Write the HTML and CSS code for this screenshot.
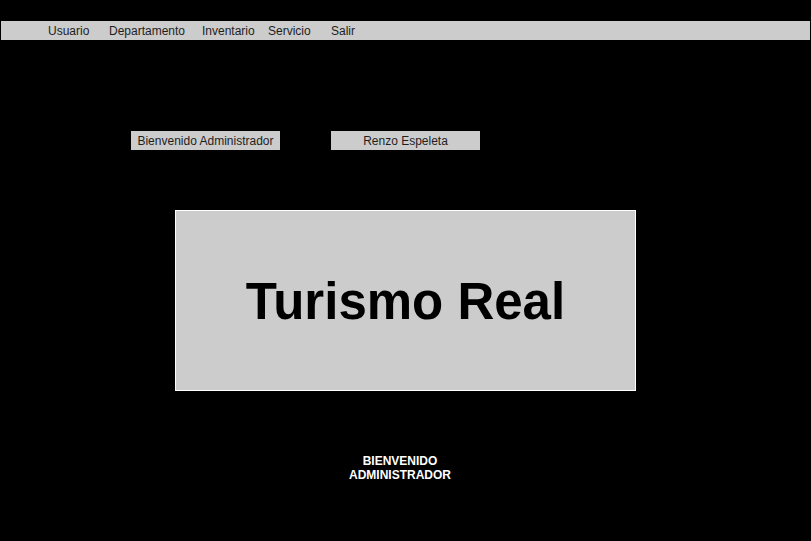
FILE: index.html
```html
<!DOCTYPE html>
<html lang="es">
<head>
<meta charset="utf-8">
<title>Turismo Real</title>
<link rel="stylesheet" href="styles.css">
</head>
<body>
<nav class="nav">
  <a class="nav-item">Usuario</a>
  <a class="nav-item">Departamento</a>
  <a class="nav-item">Inventario</a>
  <a class="nav-item">Servicio</a>
  <a class="nav-item">Salir</a>
</nav>
<div class="info-row">
  <div class="info-box">Bienvenido Administrador</div>
  <div class="info-box">Renzo Espeleta</div>
</div>
<div class="hero">Turismo Real</div>
<div class="welcome">BIENVENIDO<br>ADMINISTRADOR</div>
</body>
</html>
```
FILE: styles.css
```css
html, body {
  margin: 0;
  padding: 0;
  background: #000;
  font-family: "Liberation Sans", Arial, sans-serif;
}
body {
  width: 811px;
  height: 541px;
  overflow: hidden;
}
.nav {
  margin: 21px 0 0 1px;
  width: 809px;
  height: 19px;
  background: #cccccc;
  display: grid;
  grid-template-columns: 61px 93px 66px 63px auto;
  padding: 2px 0 0 47px;
  box-sizing: border-box;
}
.nav-item {
  font-size: 12px;
  line-height: 17px;
  color: #1e1e1e;
  white-space: nowrap;
}
.info-row {
  display: flex;
  gap: 51px;
  margin-top: 91px;
  padding-left: 131px;
}
.info-box {
  width: 149px;
  height: 19px;
  box-sizing: border-box;
  padding-top: 1px;
  background: #cccccc;
  color: #1e1e1e;
  font-size: 12px;
  line-height: 18px;
  text-align: center;
  white-space: nowrap;
}
.hero {
  margin: 60px 0 0 175px;
  width: 461px;
  height: 181px;
  box-sizing: border-box;
  border: 1px solid #ffffff;
  padding-top: 2px;
  background: #cccccc;
  color: #000;
  font-weight: bold;
  font-size: 51px;
  display: flex;
  align-items: center;
  justify-content: center;
}
.welcome {
  margin-top: 63px;
  width: 800px;
  text-align: center;
  color: #fff;
  font-weight: bold;
  font-size: 12px;
  line-height: 14px;
}
```
